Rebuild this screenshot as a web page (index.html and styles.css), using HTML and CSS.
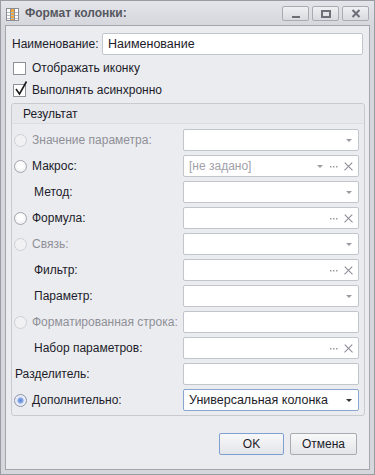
FILE: index.html
```
<!DOCTYPE html>
<html lang="ru">
<head>
    <meta charset="UTF-8">
    <title>Формат колонки</title>
    <link rel="stylesheet" href="styles.css">
</head>
<body>
    <div class="window">
        <div class="titlebar">
            <svg class="app-icon" width="13" height="13" viewBox="0 0 13 13">
                <rect x="0.5" y="0.5" width="12" height="12" fill="#fff" stroke="#8a8c96"/>
                <rect x="5" y="1" width="3" height="11" fill="#f3a73a"/>
                <path d="M1 4.5H12M1 7.5H12M1 10.5H12" stroke="#b8bac2"/>
                <path d="M4.5 1V12M8.5 1V12" stroke="#8a8c96"/>
            </svg>
            <span class="title">Формат колонки:</span>
            <div class="win-buttons">
                <div class="win-btn"><svg width="10" height="8" viewBox="0 0 10 8"><rect x="1" y="6" width="8" height="2" fill="#6c6e78"/></svg></div>
                <div class="win-btn"><svg width="10" height="8" viewBox="0 0 10 8"><rect x="1" y="1" width="8" height="6" fill="none" stroke="#6c6e78" stroke-width="2"/></svg></div>
                <div class="win-btn"><svg width="10" height="9" viewBox="0 0 10 9"><path d="M1.5 1L8.5 8M8.5 1L1.5 8" stroke="#6c6e78" stroke-width="2"/></svg></div>
            </div>
        </div>

        <div class="client">
            <div class="name-row">
                <label>Наименование:</label>
                <div class="input text">Наименование</div>
            </div>

            <div class="check-row first">
                <span class="checkbox"></span>
                <span>Отображать иконку</span>
            </div>
            <div class="check-row">
                <span class="checkbox">
                    <svg class="tick" width="14" height="16" viewBox="0 0 14 16"><path d="M2 9L5.5 14L12.5 1.5" fill="none" stroke="#1a1a1a" stroke-width="1.6"/></svg>
                </span>
                <span>Выполнять асинхронно</span>
            </div>

            <div class="group">
                <div class="group-head">Результат</div>
                <div class="group-body">
                    <div class="row disabled">
                        <span class="radio"></span><span class="lbl">Значение параметра:</span>
                        <div class="input"><span class="arrow"></span></div>
                    </div>
                    <div class="row">
                        <span class="radio"></span><span class="lbl">Макрос:</span>
                        <div class="input"><span class="placeholder">[не задано]</span><span class="arrow"></span><svg class="dots" width="8" height="2" viewBox="0 0 8 2"><path d="M0 0h1.5v1.5H0zM3 0h1.5v1.5H3zM6 0h1.5v1.5H6z"/></svg><span class="clear"></span></div>
                    </div>
                    <div class="row">
                        <span class="lbl sub">Метод:</span>
                        <div class="input"><span class="arrow"></span></div>
                    </div>
                    <div class="row">
                        <span class="radio"></span><span class="lbl">Формула:</span>
                        <div class="input"><svg class="dots" width="8" height="2" viewBox="0 0 8 2"><path d="M0 0h1.5v1.5H0zM3 0h1.5v1.5H3zM6 0h1.5v1.5H6z"/></svg><span class="clear"></span></div>
                    </div>
                    <div class="row disabled">
                        <span class="radio"></span><span class="lbl">Связь:</span>
                        <div class="input"><span class="arrow"></span></div>
                    </div>
                    <div class="row">
                        <span class="lbl sub">Фильтр:</span>
                        <div class="input"><svg class="dots" width="8" height="2" viewBox="0 0 8 2"><path d="M0 0h1.5v1.5H0zM3 0h1.5v1.5H3zM6 0h1.5v1.5H6z"/></svg><span class="clear"></span></div>
                    </div>
                    <div class="row">
                        <span class="lbl sub">Параметр:</span>
                        <div class="input"><span class="arrow"></span></div>
                    </div>
                    <div class="row disabled">
                        <span class="radio"></span><span class="lbl">Форматированная строка:</span>
                        <div class="input"></div>
                    </div>
                    <div class="row">
                        <span class="lbl sub">Набор параметров:</span>
                        <div class="input"><svg class="dots" width="8" height="2" viewBox="0 0 8 2"><path d="M0 0h1.5v1.5H0zM3 0h1.5v1.5H3zM6 0h1.5v1.5H6z"/></svg><span class="clear"></span></div>
                    </div>
                    <div class="row">
                        <span class="lbl plain">Разделитель:</span>
                        <div class="input"></div>
                    </div>
                    <div class="row">
                        <span class="radio checked"></span><span class="lbl">Дополнительно:</span>
                        <div class="input focused"><span class="value">Универсальная колонка</span><span class="arrow dark"></span></div>
                    </div>
                </div>
            </div>

            <div class="buttons">
                <div class="btn default">OK</div>
                <div class="btn">Отмена</div>
            </div>
        </div>
    </div>
</body>
</html>
```

FILE: styles.css
```
body {
    margin: 0;
    padding: 0;
    font-family: 'Liberation Sans', Arial, sans-serif;
    font-size: 12px;
    color: #1c1c2a;
}
.window {
    width: 375px;
    height: 475px;
    box-sizing: border-box;
    border: 1px solid #9a9ca4;
    background: #d6d7dd;
    display: flex;
    flex-direction: column;
}
.titlebar {
    height: 24px;
    display: flex;
    align-items: center;
    background: linear-gradient(#e4e5ea, #d6d7dd);
    padding: 0 5px 0 5px;
}
.app-icon {
    margin-top: 2px;
}
.title {
    margin-left: 6px;
    font-weight: bold;
    font-size: 12px;
    color: #55575f;
    flex: 1;
}
.win-buttons {
    display: flex;
    gap: 3px;
    align-self: flex-start;
    margin-top: 5px;
}
.win-btn {
    width: 27px;
    height: 15px;
    box-sizing: border-box;
    border: 1px solid #a9abb3;
    border-radius: 2px;
    background: linear-gradient(#f0f0f3, #d9dadf);
    display: flex;
    align-items: center;
    justify-content: center;
}
.client {
    flex: 1;
    margin: 0 4px 4px 4px;
    border: 1px solid #a4a6ae;
    background: #ebecf0;
    padding: 7px 6px 0 6px;
}
.name-row {
    display: flex;
    align-items: center;
    height: 22px;
}
.name-row label {
    width: 90px;
    white-space: nowrap;
}
.name-row .input {
    flex: 1;
    font-size: 12.5px;
}
.input {
    height: 22px;
    box-sizing: border-box;
    border: 1px solid #c3c5cc;
    border-radius: 2px;
    background: #fff;
    display: flex;
    align-items: center;
    justify-content: flex-end;
    padding: 0 5px;
    gap: 6px;
    flex-shrink: 0;
    white-space: nowrap;
}
.input.text {
    justify-content: flex-start;
    color: #1c1c2a;
}
.placeholder, .value {
    margin-right: auto;
}
.placeholder {
    color: #a0a0a8;
}
.value {
    font-size: 12.5px;
    color: #1c1c2a;
}
.input.focused {
    border-color: #8aa5cf;
}
.arrow {
    width: 0;
    height: 0;
    border-left: 3px solid transparent;
    border-right: 3px solid transparent;
    border-top: 3px solid #9a9ca4;
    margin-right: 1px;
}
.arrow.dark {
    border-top-color: #333;
}
.dots {
    fill: #9a9ca4;
    margin-top: 2px;
}
.clear {
    width: 9px;
    height: 9px;
    position: relative;
}
.clear::before, .clear::after {
    content: "";
    position: absolute;
    left: -1px;
    top: 4px;
    width: 11px;
    height: 1.4px;
    background: #8a8c94;
    transform: rotate(45deg);
}
.clear::after {
    transform: rotate(-45deg);
}
.check-row {
    height: 22px;
    display: flex;
    align-items: center;
    gap: 6px;
    padding-left: 1px;
}
.check-row.first {
    margin-top: 2px;
}
.checkbox {
    width: 13px;
    height: 13px;
    box-sizing: border-box;
    border: 1px solid #8e9098;
    background: #fff;
    position: relative;
}
.tick {
    position: absolute;
    left: 0;
    top: -5px;
}
.group {
    margin: 2px -2px 0 -1px;
    border: 1px solid #c8cad0;
    border-radius: 3px;
}
.group-head {
    height: 19px;
    line-height: 20px;
    padding-left: 11px;
    border-bottom: 1px solid #dcdde2;
    background: #e7e8ec;
    border-radius: 3px 3px 0 0;
}
.group-body {
    padding: 5px 5px 4px 2px;
    display: flex;
    flex-direction: column;
    gap: 4px;
}
.row {
    display: flex;
    align-items: center;
    height: 22px;
    white-space: nowrap;
}
.row .input {
    width: 176px;
    margin-left: auto;
}
.lbl {
    margin-left: 5px;
}
.lbl.sub {
    margin-left: 20px;
}
.lbl.plain {
    margin-left: 1px;
}
.disabled .lbl {
    color: #8f9097;
}
.radio {
    width: 13px;
    height: 13px;
    box-sizing: border-box;
    border-radius: 50%;
    border: 1px solid #a4a6ae;
    background: radial-gradient(circle at 50% 40%, #ffffff 30%, #e6e7eb 100%);
}
.disabled .radio {
    border-color: #cfd0d5;
    background: #f1f1f3;
}
.radio.checked {
    background: radial-gradient(circle, #5d86d6 0, #86a8e6 2.5px, #dfe6f4 3.5px, #ffffff 100%);
    border-color: #8c93a6;
}
.buttons {
    display: flex;
    justify-content: flex-end;
    gap: 6px;
    margin-top: 17px;
    padding-right: 6px;
}
.btn {
    height: 22px;
    box-sizing: border-box;
    border: 1px solid #a9abb2;
    border-radius: 2px;
    background: linear-gradient(#f8f8f9, #e4e5e9);
    display: flex;
    align-items: center;
    justify-content: center;
    width: 67px;
}
.btn.default {
    border-color: #7e9fd2;
    width: 65px;
}
```
